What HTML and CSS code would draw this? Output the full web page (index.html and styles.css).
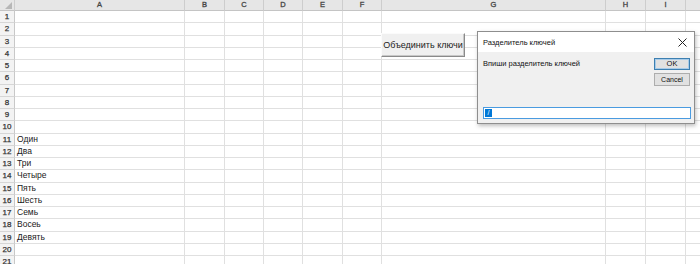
FILE: index.html
```html
<!DOCTYPE html>
<html lang="ru">
<head>
<meta charset="utf-8">
<title>Excel</title>
<link rel="stylesheet" href="styles.css">
</head>
<body>
<div class="sheet">
  <div class="row head"><div class="corner"><span class="tri"></span></div><div>A</div><div>B</div><div>C</div><div>D</div><div>E</div><div>F</div><div>G</div><div>H</div><div>I</div><div></div></div>
  <div class="row"><div class="rh">1</div><div></div><div></div><div></div><div></div><div></div><div></div><div></div><div></div><div></div><div></div></div>
  <div class="row"><div class="rh">2</div><div></div><div></div><div></div><div></div><div></div><div></div><div></div><div></div><div></div><div></div></div>
  <div class="row"><div class="rh">3</div><div></div><div></div><div></div><div></div><div></div><div></div><div></div><div></div><div></div><div></div></div>
  <div class="row"><div class="rh">4</div><div></div><div></div><div></div><div></div><div></div><div></div><div></div><div></div><div></div><div></div></div>
  <div class="row"><div class="rh">5</div><div></div><div></div><div></div><div></div><div></div><div></div><div></div><div></div><div></div><div></div></div>
  <div class="row"><div class="rh">6</div><div></div><div></div><div></div><div></div><div></div><div></div><div></div><div></div><div></div><div></div></div>
  <div class="row"><div class="rh">7</div><div></div><div></div><div></div><div></div><div></div><div></div><div></div><div></div><div></div><div></div></div>
  <div class="row"><div class="rh">8</div><div></div><div></div><div></div><div></div><div></div><div></div><div></div><div></div><div></div><div></div></div>
  <div class="row"><div class="rh">9</div><div></div><div></div><div></div><div></div><div></div><div></div><div></div><div></div><div></div><div></div></div>
  <div class="row"><div class="rh">10</div><div></div><div></div><div></div><div></div><div></div><div></div><div></div><div></div><div></div><div></div></div>
  <div class="row"><div class="rh">11</div><div>Один</div><div></div><div></div><div></div><div></div><div></div><div></div><div></div><div></div><div></div></div>
  <div class="row"><div class="rh">12</div><div>Два</div><div></div><div></div><div></div><div></div><div></div><div></div><div></div><div></div><div></div></div>
  <div class="row"><div class="rh">13</div><div>Три</div><div></div><div></div><div></div><div></div><div></div><div></div><div></div><div></div><div></div></div>
  <div class="row"><div class="rh">14</div><div>Четыре</div><div></div><div></div><div></div><div></div><div></div><div></div><div></div><div></div><div></div></div>
  <div class="row"><div class="rh">15</div><div>Пять</div><div></div><div></div><div></div><div></div><div></div><div></div><div></div><div></div><div></div></div>
  <div class="row"><div class="rh">16</div><div>Шесть</div><div></div><div></div><div></div><div></div><div></div><div></div><div></div><div></div><div></div></div>
  <div class="row"><div class="rh">17</div><div>Семь</div><div></div><div></div><div></div><div></div><div></div><div></div><div></div><div></div><div></div></div>
  <div class="row"><div class="rh">18</div><div>Восеь</div><div></div><div></div><div></div><div></div><div></div><div></div><div></div><div></div><div></div></div>
  <div class="row"><div class="rh">19</div><div>Девять</div><div></div><div></div><div></div><div></div><div></div><div></div><div></div><div></div><div></div></div>
  <div class="row"><div class="rh">20</div><div></div><div></div><div></div><div></div><div></div><div></div><div></div><div></div><div></div><div></div></div>
  <div class="row"><div class="rh">21</div><div></div><div></div><div></div><div></div><div></div><div></div><div></div><div></div><div></div><div></div></div>
</div>

<button class="macro">Объединить ключи</button>

<div class="dialog">
  <div class="titlebar">
    <span class="title">Разделитель ключей</span>
    <svg class="close" width="9" height="9" viewBox="0 0 9 9"><path d="M0.5 0.5 L8.5 8.5 M8.5 0.5 L0.5 8.5" stroke="#222" stroke-width="1" fill="none"/></svg>
  </div>
  <div class="dbody">
    <div class="dtop">
      <div class="prompt">Впиши разделитель ключей</div>
      <div class="btns">
        <button class="dbtn ok">OK</button>
        <button class="dbtn">Cancel</button>
      </div>
    </div>
    <div class="input"><span class="sel">/</span></div>
  </div>
</div>
</body>
</html>
```
FILE: styles.css
```css
html, body {
  margin: 0;
  padding: 0;
  background: #ffffff;
  overflow: hidden;
  width: 700px;
  height: 264px;
}

body {
  font-family: "Liberation Sans", Arial, sans-serif;
  color: #222;
  position: relative;
}

.sheet {
  display: flex;
  flex-direction: column;
  width: 726px;
}

.row {
  display: grid;
  grid-template-columns: 15px 170px 40px 39px 39px 40px 39px 224px 40px 40px 40px;
  height: 12.25px;
}

.row > div {
  box-sizing: border-box;
  border-right: 1px solid #e0e0e0;
  border-bottom: 1px solid #e0e0e0;
  font-size: 8.5px;
  line-height: 11px;
  padding-left: 2px;
  white-space: nowrap;
  overflow: hidden;
  color: #1a1a1a;
}

.row > .rh {
  background: #f3f3f3;
  border-right: 1px solid #c8c8c8;
  border-bottom: 1px solid #d6d6d6;
  text-align: center;
  padding-left: 0;
  color: #333;
  font-size: 8px;
  -webkit-text-stroke: 0.25px #333;
}

.head {
  height: 11px;
}

.head > div {
  background: #e6e6e6;
  border-right: 1px solid #cdcdcd;
  border-bottom: 1px solid #c4c4c4;
  text-align: center;
  padding-left: 0;
  color: #444;
  font-size: 7.5px;
  line-height: 10px;
  -webkit-text-stroke: 0.3px #444;
}

.head > .corner {
  position: relative;
  background: #e6e6e6;
}

.tri {
  position: absolute;
  right: 2px;
  bottom: 1px;
  width: 0;
  height: 0;
  border-left: 7px solid transparent;
  border-bottom: 7px solid #b7b7b7;
}

.macro {
  position: absolute;
  left: 381px;
  top: 33px;
  width: 84px;
  height: 24px;
  box-sizing: border-box;
  margin: 0;
  padding: 0;
  background: #f0f0f0;
  border: 1px solid;
  border-color: #fbfbfb #8a8a8a #8a8a8a #fbfbfb;
  box-shadow: inset -1px -1px 0 #c8c8c8;
  font-family: "Liberation Sans", Arial, sans-serif;
  font-size: 9px;
  color: #222;
}

.dialog {
  position: absolute;
  left: 477px;
  top: 31px;
  width: 218px;
  height: 93px;
  box-sizing: border-box;
  border: 1px solid #8e8e8e;
  background: #f0f0f0;
  box-shadow: 1px 2px 4px rgba(0, 0, 0, 0.25);
  display: flex;
  flex-direction: column;
}

.titlebar {
  height: 20px;
  background: #ffffff;
  display: flex;
  align-items: center;
  justify-content: space-between;
  padding: 0 7px 0 5px;
  flex: none;
}

.title {
  font-size: 7.5px;
  color: #111;
}

.close {
  display: block;
}

.dbody {
  flex: 1;
  display: flex;
  flex-direction: column;
  justify-content: space-between;
  padding: 6px 3px 4px 5px;
}

.dtop {
  display: flex;
  justify-content: space-between;
  align-items: flex-start;
}

.prompt {
  font-size: 7.5px;
  color: #111;
  padding-top: 1px;
}

.btns {
  display: flex;
  flex-direction: column;
  gap: 3px;
  margin-right: 1px;
}

.dbtn {
  width: 36px;
  height: 13px;
  box-sizing: border-box;
  margin: 0;
  padding: 0;
  background: #e1e1e1;
  border: 1px solid #adadad;
  font-family: "Liberation Sans", Arial, sans-serif;
  font-size: 7px;
  line-height: 10px;
  color: #111;
}

.dbtn.ok {
  border: 1px solid #3c7fb1;
  box-shadow: inset 0 0 0 1px #a8cbe8;
  height: 12px;
  font-size: 7.5px;
}

.input {
  height: 12px;
  box-sizing: border-box;
  background: #ffffff;
  border: 1px solid #4a9be0;
  padding: 1px;
  display: flex;
  align-items: stretch;
}

.sel {
  background: #0078d7;
  color: #ffffff;
  font-size: 7px;
  line-height: 8px;
  width: 7px;
  text-align: center;
}
```
